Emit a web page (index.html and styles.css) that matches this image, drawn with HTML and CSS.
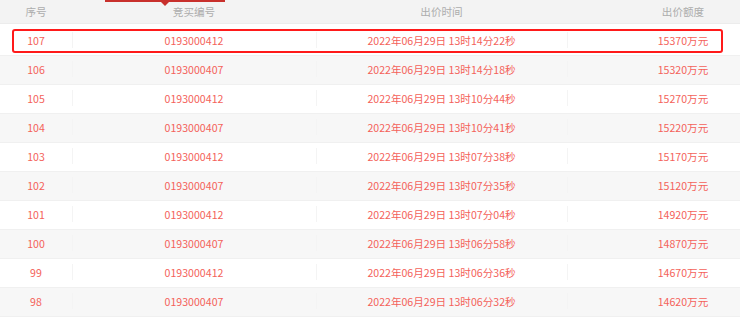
FILE: index.html
```html
<!DOCTYPE html>
<html lang="zh-CN">
<head>
<meta charset="utf-8">
<link rel="stylesheet" href="styles.css">
</head>
<body>
<div class="page">
  <div class="tab-indicator"></div>
  <div class="table">
    <div class="row head">
      <div class="cell">序号</div>
      <div class="cell">竞买编号</div>
      <div class="cell">出价时间</div>
      <div class="cell">出价额度</div>
    </div>
    <div class="gap"></div>
    <div class="row">
      <div class="cell">107</div><div class="cell sep">0193000412</div><div class="cell sep">2022年06月29日 13时14分22秒</div><div class="cell sep">15370万元</div>
    </div>
    <div class="row alt">
      <div class="cell">106</div><div class="cell sep">0193000407</div><div class="cell sep">2022年06月29日 13时14分18秒</div><div class="cell sep">15320万元</div>
    </div>
    <div class="row">
      <div class="cell">105</div><div class="cell sep">0193000412</div><div class="cell sep">2022年06月29日 13时10分44秒</div><div class="cell sep">15270万元</div>
    </div>
    <div class="row alt">
      <div class="cell">104</div><div class="cell sep">0193000407</div><div class="cell sep">2022年06月29日 13时10分41秒</div><div class="cell sep">15220万元</div>
    </div>
    <div class="row">
      <div class="cell">103</div><div class="cell sep">0193000412</div><div class="cell sep">2022年06月29日 13时07分38秒</div><div class="cell sep">15170万元</div>
    </div>
    <div class="row alt">
      <div class="cell">102</div><div class="cell sep">0193000407</div><div class="cell sep">2022年06月29日 13时07分35秒</div><div class="cell sep">15120万元</div>
    </div>
    <div class="row">
      <div class="cell">101</div><div class="cell sep">0193000412</div><div class="cell sep">2022年06月29日 13时07分04秒</div><div class="cell sep">14920万元</div>
    </div>
    <div class="row alt">
      <div class="cell">100</div><div class="cell sep">0193000407</div><div class="cell sep">2022年06月29日 13时06分58秒</div><div class="cell sep">14870万元</div>
    </div>
    <div class="row">
      <div class="cell">99</div><div class="cell sep">0193000412</div><div class="cell sep">2022年06月29日 13时06分36秒</div><div class="cell sep">14670万元</div>
    </div>
    <div class="row alt">
      <div class="cell">98</div><div class="cell sep">0193000407</div><div class="cell sep">2022年06月29日 13时06分32秒</div><div class="cell sep">14620万元</div>
    </div>
  </div>
  <div class="highlight"></div>
</div>
</body>
</html>
```

FILE: styles.css
```css
html, body {
  margin: 0;
  padding: 0;
  background: #ffffff;
  overflow: hidden;
}
.page {
  position: relative;
  width: 740px;
  height: 327px;
  overflow: hidden;
  font-family: "Noto Sans CJK SC", "Noto Sans", sans-serif;
  font-size: 10.6px;
}
.table {
  width: 799px;
  display: flex;
  flex-direction: column;
}
.row {
  display: grid;
  grid-template-columns: 72px 244px 251px 232px;
  height: 29px;
  align-items: center;
  color: #f4625a;
  box-sizing: border-box;
  border-bottom: 1px solid #f0f0f0;
}
.row.alt {
  background: #f7f7f7;
}
.row.head {
  height: 24px;
  background: #f3f3f3;
  color: #adadad;
  border-bottom: 1px solid #ececec;
}
.gap {
  height: 3px;
}
.cell {
  position: relative;
  text-align: center;
  line-height: 16px;
  white-space: nowrap;
}
.cell.sep::before {
  content: "";
  position: absolute;
  left: 0;
  top: -1px;
  height: 16px;
  border-left: 1px solid #f4f4f4;
}
.tab-indicator {
  position: absolute;
  left: 105px;
  top: 0;
  width: 120px;
  height: 2px;
  background: #c8302c;
}
.tab-indicator::after {
  content: "";
  position: absolute;
  left: 56px;
  top: 2px;
  border-left: 4px solid transparent;
  border-right: 4px solid transparent;
  border-top: 4px solid #c8302c;
}
.highlight {
  position: absolute;
  left: 12px;
  top: 29px;
  width: 711px;
  height: 24px;
  box-sizing: border-box;
  border: 2px solid #ff1a1a;
  border-radius: 3px;
}
```
